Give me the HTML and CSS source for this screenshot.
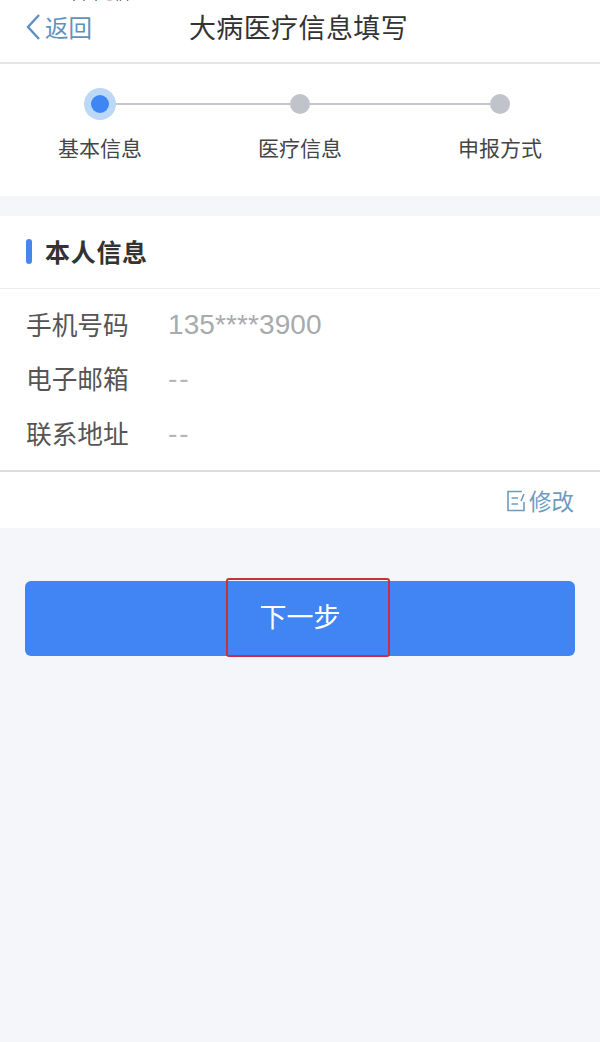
FILE: index.html
```html
<!DOCTYPE html>
<html lang="zh-CN">
<head>
    <meta charset="UTF-8">
    <meta name="viewport" content="width=device-width, initial-scale=1.0">
    <title>大病医疗信息填写</title>
    <link rel="stylesheet" href="styles.css">
</head>
<body>
    <div class="status-bar">
        <span class="carrier">中国电信</span>
    </div>

    <div class="nav">
        <a class="back">
            <svg class="back-icon" width="16" height="28" viewBox="0 0 16 28">
                <path d="M14 2 L3 14 L14 26" fill="none" stroke="#5f8fc4" stroke-width="2.4"/>
            </svg>
            返回
        </a>
        <h1>大病医疗信息填写</h1>
    </div>

    <div class="steps">
        <div class="step active">
            <span class="dot"></span>
            <span class="step-label">基本信息</span>
        </div>
        <div class="step">
            <span class="dot"></span>
            <span class="step-label">医疗信息</span>
        </div>
        <div class="step">
            <span class="dot"></span>
            <span class="step-label">申报方式</span>
        </div>
    </div>

    <div class="card">
        <div class="card-title">
            <span class="title-bar"></span>
            <h2>本人信息</h2>
        </div>
        <div class="rows">
            <div class="row"><span class="row-label">手机号码</span><span class="row-value">135****3900</span></div>
            <div class="row"><span class="row-label">电子邮箱</span><span class="row-value empty">--</span></div>
            <div class="row"><span class="row-label">联系地址</span><span class="row-value empty">--</span></div>
        </div>
        <div class="card-foot">
            <a class="edit">
                <svg class="edit-icon" width="18" height="22" viewBox="0 0 18 22">
                    <path d="M15 1.5 H1 V20.5 H17 V12" fill="none" stroke="#6d9cc0" stroke-width="1.6"/>
                    <path d="M4.5 8 H11 M4.5 14 H11 M17 4 L14 11" fill="none" stroke="#6d9cc0" stroke-width="1.6"/>
                </svg>
                修改
            </a>
        </div>
    </div>

    <div class="actions">
        <button class="next-button">下一步<span class="highlight"></span></button>
    </div>
</body>
</html>
```

FILE: styles.css
```css
* {
    box-sizing: border-box;
}

body {
    margin: 0;
    height: 1042px;
    overflow: hidden;
    background-color: #f4f6fa;
    font-family: "Noto Sans CJK SC", "Liberation Sans", sans-serif;
    color: #333;
}

h1, h2 {
    margin: 0;
    font-weight: 400;
}

.status-bar {
    height: 4px;
    overflow: hidden;
    background-color: #fff;
}

.carrier {
    display: block;
    margin-top: -20px;
    padding-left: 66px;
    font-size: 16px;
    line-height: 24px;
    color: #222;
}

/* Nav */
.nav {
    height: 60px;
    background-color: #fff;
    border-bottom: 2px solid #e6e6e8;
    display: grid;
    grid-template-columns: 1fr auto 1fr;
    align-items: center;
    padding: 0 25px 12px;
}

.nav h1 {
    grid-column: 2;
    grid-row: 1;
    margin-left: -3px;
    font-size: 27px;
    letter-spacing: 0.4px;
    line-height: 40px;
    color: #333;
}

.back {
    grid-column: 1;
    grid-row: 1;
    display: flex;
    align-items: center;
    gap: 4px;
    font-size: 23.5px;
    line-height: 32px;
    color: #5f92bb;
}

/* Steps */
.steps {
    height: 132px;
    background-color: #fff;
    display: grid;
    grid-template-columns: repeat(3, 200px);
}

.step {
    position: relative;
    display: flex;
    flex-direction: column;
    align-items: center;
    padding-top: 24px;
}

.step:not(:last-child)::after {
    content: "";
    position: absolute;
    top: 39px;
    left: 100px;
    width: 200px;
    height: 2px;
    background-color: #c6c8ce;
}

.dot {
    width: 20px;
    height: 20px;
    margin: 6px 0;
    border-radius: 50%;
    background-color: #c1c3ca;
    position: relative;
    z-index: 1;
}

.step.active .dot {
    width: 18px;
    height: 18px;
    margin: 7px 0;
    background-color: #3f86f5;
    box-shadow: 0 0 0 7px #bcd8f7;
}

.step-label {
    margin-top: 12px;
    font-size: 21px;
    line-height: 30px;
    color: #444;
}

/* Card */
.card {
    margin-top: 20px;
    height: 312px;
    background-color: #fff;
}

.card-title {
    height: 73px;
    border-bottom: 1px solid #ececee;
    display: flex;
    align-items: center;
    gap: 13px;
    padding: 0 0 2px 26px;
}

.title-bar {
    width: 6px;
    height: 25px;
    border-radius: 3px;
    background-color: #4687e8;
}

.card-title h2 {
    font-size: 25px;
    font-weight: 700;
    letter-spacing: 0.7px;
    color: #333;
}

.rows {
    height: 183px;
    border-bottom: 2px solid #dcdcde;
    padding: 9px 26px 0;
}

.row {
    height: 54.5px;
    display: flex;
    align-items: center;
}

.row-label {
    width: 142px;
    margin-top: -4px;
    font-size: 25.7px;
    color: #555;
}

.row-value {
    margin-top: -1px;
    font-family: "Liberation Sans", sans-serif;
    font-size: 28px;
    letter-spacing: 0.1px;
    color: #a8aaad;
}

.row-value.empty {
    letter-spacing: 2px;
    color: #b4b6b9;
}

.card-foot {
    height: 56px;
    display: flex;
    justify-content: flex-end;
    align-items: center;
    padding-right: 26px;
}

.edit {
    display: flex;
    align-items: center;
    gap: 4px;
    font-size: 22.5px;
    color: #6d9cc0;
}

.edit-icon {
    margin-top: 1px;
}

/* Button */
.actions {
    padding: 53px 25px 0;
}

.next-button {
    position: relative;
    display: block;
    width: 100%;
    height: 75px;
    padding-bottom: 8px;
    border: none;
    border-radius: 6px;
    background-color: #4085f3;
    color: #fff;
    font-family: inherit;
    font-size: 27px;
    cursor: pointer;
}

.highlight {
    position: absolute;
    top: -3px;
    left: 201px;
    width: 164px;
    height: 79px;
    border: 2px solid #c8303f;
    border-radius: 3px;
}
```
